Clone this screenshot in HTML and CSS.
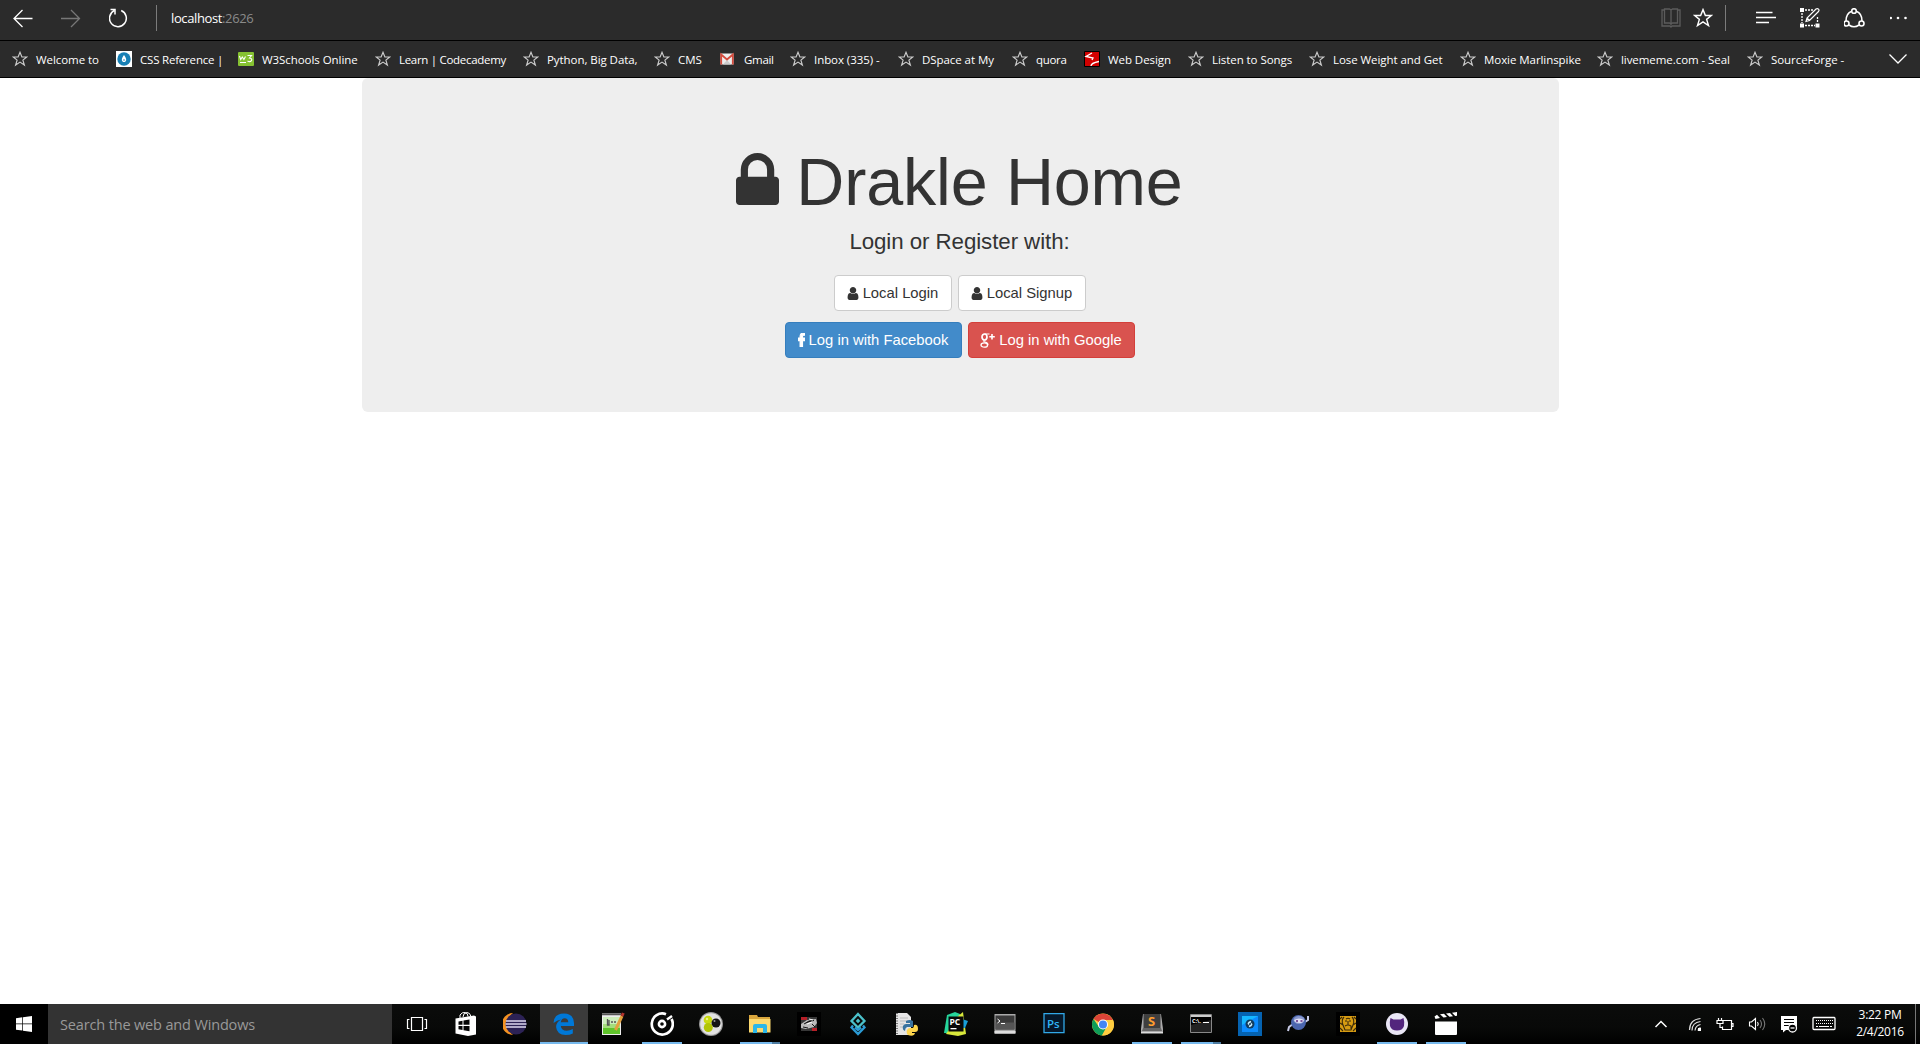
FILE: index.html
```html
<!DOCTYPE html>
<html lang="en">
<head>
<meta charset="utf-8">
<title>Drakle Home</title>
<link rel="stylesheet" href="styles.css">
</head>
<body>
<svg class="defs" width="0" height="0" aria-hidden="true">
  <symbol id="star" viewBox="0 0 16 16"><path d="M8 1.3L9.9 6h4.8l-3.8 3.1 1.5 5L8 11.1l-4.4 3 1.5-5L1.3 6h4.8z" fill="none" stroke="currentColor" stroke-width="1.15"/></symbol>
  <symbol id="user" viewBox="256 128 1280 1536"><path fill="currentColor" d="M1536 1399q0 109-62.5 187t-150.5 78h-854q-88 0-150.5-78t-62.5-187q0-85 8.5-160.5t31.5-152 58.5-131 94-89 134.5-34.5q131 128 313 128t313-128q76 0 134.5 34.5t94 89 58.5 131 31.5 152 8.5 160.5zm-256-887q0 159-112.5 271.5t-271.5 112.5-271.5-112.5-112.5-271.5 112.5-271.5 271.5-112.5 271.5 112.5 112.5 271.5z"/></symbol>
</svg>

<header class="toolbar">
  <div class="nav">
    <svg width="20" height="20" viewBox="0 0 20 20" fill="none" stroke="#fff" stroke-width="1.3"><path d="M19.5 10.500H1M9.500 2L1 10.500l8.500 8.500"/></svg>
    <svg width="20" height="20" viewBox="0 0 20 20" fill="none" stroke="#777" stroke-width="1.3"><path d="M0 10.500H18.500M10 2L18.500 10.500 10 19"/></svg>
    <svg width="20" height="20" viewBox="1 0 20 20" fill="none" stroke="#fff" stroke-width="1.500"><path d="M13.200 2.500a8.400 8.400 0 1 1-7 .200M2.500 1.500h4.500v5"/></svg>
  </div>
  <div class="address"><span class="host">localhost</span><span class="port">:2626</span></div>
  <div class="page-tools">
    <svg width="20" height="20" viewBox="0 0 20 20" fill="none" stroke="#5c5c5c" stroke-width="1.300"><path d="M3 2H1v16h8l1 1 1-1h8V2h-2M3.500 1h5L10 2v14l-1.500-1h-5zM16.500 1h-5L10 2v14l1.500-1h5z"/></svg>
    <svg width="20" height="20" viewBox="0 0 16 16" class="fav"><use href="#star"/></svg>
  </div>
  <div class="hub">
    <svg width="20" height="20" viewBox="0 0 20 20" fill="none" stroke="#fff" stroke-width="1.300"><path d="M0 4.500h16.500M0 9.500h20M0 14.500h13"/></svg>
    <svg width="20" height="20" viewBox="0 0 20 20" fill="none" stroke="#fff"><path stroke-width="1.300" stroke-dasharray="2 1" d="M5 2h8M2 5v10M5 17.500h10M17.500 9v6"/><path fill="#fff" stroke="none" d="M0 0h4v4H0zM0 15.500h4v4H0zM15.500 15.500h4v4h-4z"/><path stroke-width="1.200" d="M6 13.500l1-3.500L16 1q1.500-.8 2.500.2t0 2.300l-9 9zM7 10l2.500 2.500"/></svg>
    <svg width="22" height="20" viewBox="1 0 22 20" fill="none" stroke="#fff" stroke-width="1.600"><circle cx="11" cy="3" r="2.300"/><circle cx="3.500" cy="15.500" r="2.500"/><circle cx="18.500" cy="15.500" r="2.500"/><path d="M8.700 3.300Q3 5.500 3 13M13.300 3.300Q19 5.500 19 13M6 17q5 3.500 10 0"/></svg>
    <svg width="20" height="20" viewBox="2 0 20 20" fill="#fff"><circle cx="2.800" cy="10" r="1.300"/><circle cx="10" cy="10" r="1.300"/><circle cx="17.500" cy="10" r="1.300"/></svg>
  </div>
</header>

<nav class="bookmarks">
  <a><svg class="bi"><use href="#star"/></svg><span>Welcome to</span></a>
  <a><svg class="bi" viewBox="0 0 16 16"><path fill="#fff" d="M0 0h16v16H0z"/><circle cx="8" cy="8" r="6.700" fill="#1780b5"/><path fill="#fff" d="M8 4q3.500 4.500 1.500 6.500-1.500 1-3 0Q4.500 8.500 8 4z"/><circle cx="8" cy="9" r=".8" fill="#1780b5"/></svg><span>CSS Reference |</span></a>
  <a><svg class="bi" viewBox="0 0 16 16"><rect y="1" width="16" height="14" rx="1" fill="#86c232"/><path d="M1.500 5l1.200 3.500 1.600-2.500 1.600 2.500L7.500 5.500M9.500 4.500h4l-2 2.500q3 .5 2 2.700-1.500 1.800-4 .3M2 11.500h6" fill="none" stroke="#fff" stroke-width="1.100"/></svg><span>W3Schools Online</span></a>
  <a><svg class="bi"><use href="#star"/></svg><span>Learn | Codecademy</span></a>
  <a><svg class="bi"><use href="#star"/></svg><span>Python, Big Data,</span></a>
  <a><svg class="bi"><use href="#star"/></svg><span>CMS</span></a>
  <a><svg class="bi" viewBox="0 0 16 16"><path fill="#eee" d="M.5 2.500h13v11H.5z"/><path fill="#ccc" d="M3 13.500l4-4.500 4 4.500z"/><path d="M1.200 13.500V3.500L7 8.500l5.800-5v10" fill="none" stroke="#d54b3d" stroke-width="1.800"/></svg><span>Gmail</span></a>
  <a><svg class="bi"><use href="#star"/></svg><span>Inbox (335) -</span></a>
  <a><svg class="bi"><use href="#star"/></svg><span>DSpace at My</span></a>
  <a><svg class="bi"><use href="#star"/></svg><span>quora</span></a>
  <a><svg class="bi" viewBox="0 0 16 16"><path fill="#d20000" stroke="#000" d="M.5.5h15v15H.5z"/><path d="M8 2L2 5.500l7 1.500-1 2M7 15q0-3 8-4.500" fill="none" stroke="#fff" stroke-width="1.300"/></svg><span>Web Design</span></a>
  <a><svg class="bi"><use href="#star"/></svg><span>Listen to Songs</span></a>
  <a><svg class="bi"><use href="#star"/></svg><span>Lose Weight and Get</span></a>
  <a><svg class="bi"><use href="#star"/></svg><span>Moxie Marlinspike</span></a>
  <a><svg class="bi"><use href="#star"/></svg><span>livememe.com - Seal</span></a>
  <a><svg class="bi"><use href="#star"/></svg><span>SourceForge -</span></a>
  <svg class="more" width="18" height="10" viewBox="0 0 18 10" fill="none" stroke="#fff" stroke-width="1.300"><path d="M.5.5L9 9 17.500.5"/></svg>
</nav>

<main class="page">
  <section class="jumbotron">
    <h1><svg width="43" height="52" viewBox="320 128 1152 1408" preserveAspectRatio="none"><path fill="#333" d="M640 768h512v-192q0-106-75-181t-181-75-181 75-75 181v192zm832 96v576q0 40-28 68t-68 28h-960q-40 0-68-28t-28-68v-576q0-40 28-68t68-28h32v-192q0-184 132-316t316-132 316 132 132 316v192h32q40 0 68 28t28 68z"/></svg><span>Drakle Home</span></h1>
    <p>Login or Register with:</p>
    <div class="row">
      <a class="btn login"><svg width="12" height="13"><use href="#user"/></svg><span>Local Login</span></a>
      <a class="btn signup"><svg width="12" height="13"><use href="#user"/></svg><span>Local Signup</span></a>
    </div>
    <div class="row">
      <a class="btn facebook"><svg width="7" height="14" viewBox="479 0 864 1664" preserveAspectRatio="none"><path fill="#fff" stroke="#fff" stroke-width="130" d="M1343 12v264h-157q-86 0-116 36t-30 108v189h293l-39 296h-254v759h-306v-759h-255v-296h255v-218q0-186 104-288.500t277-102.500q147 0 228 12z"/></svg><span>Log in with Facebook</span></a>
      <a class="btn google"><svg width="15" height="15" viewBox="0 0 15 15" fill="none" stroke="#fff"><ellipse cx="4.500" cy="4" rx="2.500" ry="3" stroke-width="1.700"/><ellipse cx="4.300" cy="12" rx="3.300" ry="2.200" stroke-width="1.300"/><path stroke-width="1.200" d="M4.500 1h5M4.500 7.200q-1.500 1.300.5 1.800 3 .8 3 2.800"/><path stroke-width="1.600" d="M12 1v5.500M9.300 3.700h5.500"/></svg><span>Log in with Google</span></a>
    </div>
  </section>
</main>

<footer class="taskbar">
  <div class="start"><svg width="16" height="16" viewBox="0 0 16 16" fill="#fff"><path d="M0 2.200l6.300-.9v6.300H0zM7 1.200L16 0v7.600H7zM0 8.300h6.300v6.300L0 13.700zM7 8.300h9V16l-9-1.300z"/></svg></div>
  <div class="search">Search the web and Windows</div>
  <div class="apps">
    <div><svg viewBox="0 0 24 24" fill="none" stroke="#fff" stroke-width="1.200"><path d="M6.500 5.500h11v13h-11zM4.500 7.500h-2v9h2M19.500 7.500h2v9h-2"/></svg></div>
    <div><svg viewBox="0 0 24 24"><path fill="#fff" d="M1.500 6.500L20 3.500l2 1v18L14 24 1.500 21.500z"/><path d="M6 6V3q2-3 5-2.500t3 4M9 5q0-4 4-4.500 3 0 4 4" fill="none" stroke="#fff" stroke-width="1"/><path fill="#050505" d="M4.500 9.500l4-.7v4h-4zM9.500 8.600l6-1v5.200h-6zM4.500 14h4v4l-4-.8zM9.500 14h6v5.200l-6-1z"/></svg></div>
    <div><svg viewBox="0 0 24 24"><path fill="#f59322" d="M10 1A11 11 0 0 0 10 23 14 14 0 0 1 10 1z"/><circle cx="13" cy="12" r="10.500" fill="#2c2255"/><path stroke="#ddd8ef" stroke-width="1.700" d="M3 9h20M2.500 12h21M3 15h20"/></svg></div>
    <div class="active"><svg viewBox="0 0 24 24"><path fill="#0078d7" d="M1.500 11Q2 1.500 12 1.500q9.500 0 10 9.500v3H8.800q.5 4.700 6 4.700 3 0 6-1.700v4.500q-3 1.600-7 1.600-9-.2-9.700-8Q4.200 10 9 7.500q-4 .5-7.500 3.500zM8.800 10.300h7.500q-.2-4-3.700-4-3.200 0-3.800 4z"/></svg></div>
    <div><svg viewBox="0 0 24 24"><path fill="#eee" d="M1 1.500h19v21.500H1z"/><path fill="#cdeebb" d="M2 5h17v8H2z"/><path fill="#a4dd7c" d="M2 12h17v4H2z"/><path fill="#5fc52b" d="M2 16h17v6H2z"/><path d="M1 2.500h19M6.500 7v6H8V8M10 10h2M13 10h2" stroke="#555" stroke-width="1.300" fill="none"/><path stroke="#e3a13e" stroke-width="3" d="M14.500 18L21 4"/><path stroke="#b3332d" stroke-width="3" d="M21 4l1.300-3"/></svg></div>
    <div class="open"><svg viewBox="0 0 24 24" fill="none" stroke="#fff"><path stroke-width="2.700" d="M21.500 7A10.500 10.500 0 1 1 16 2.200"/><circle cx="12" cy="12" r="3.100" stroke-width="2.600"/><path stroke-width="2.400" d="M17 7.500l5-3.500"/></svg></div>
    <div><svg viewBox="0 0 24 24"><circle cx="12" cy="12" r="12" fill="#999"/><circle cx="12" cy="12" r="10.800" fill="#e2e2e2"/><circle cx="9" cy="8" r="4.300" fill="#c9da10"/><circle cx="9.300" cy="15.500" r="4.500" fill="#b2c505"/><circle cx="17" cy="11" r="4.500" fill="#151515"/><circle cx="15.500" cy="9" r="1" fill="#999"/><circle cx="8" cy="7" r="1.200" fill="#edf488"/></svg></div>
    <div class="open stacked"><svg viewBox="0 0 24 24"><path fill="#d9a63d" d="M1 3h8l1 2h12v15H1z"/><path fill="#fbd96f" d="M1 7h21.500v13.500H1z"/><path fill="#29b6e8" d="M5 14q0-2 2-2h10q2 0 2 2v7h-4v-5H9v5H5z"/></svg></div>
    <div><svg viewBox="0 0 24 24"><path fill="#000" d="M0 0h24v24H0z"/><path fill="#373737" d="M4 5h16v14H4z"/><path fill="#b62028" d="M4 5h6v3H4zM15 16h5v3h-5z"/><path fill="#bbb" d="M4 12l6-4 9-1 1 4-3 4-8 2-5-1z"/><path stroke="#171717" d="M7 12l5-3 5-.5M6 15l5 1M15 12l3 3"/><path stroke="#fff" d="M10 12l5-2M12 7l4 1"/></svg></div>
    <div><svg viewBox="0 0 24 24" fill="none" stroke-width="2.300"><path stroke="#4bc1ca" d="M12 2l6.500 7-6.500 6.500L5.500 9z"/><path fill="#4bc1ca" d="M12 6.500l2.300 2.500-2.300 2.300L9.700 9z"/><path stroke="#2b9bd5" d="M7 13.500l-1.500 2 6.500 6.500 6.500-6.500-1.500-2M9 15.500l3 2.500 3-2.500"/></svg></div>
    <div><svg viewBox="0 0 24 24"><path fill="#e5e5e5" d="M1 1h11l4 4v18H1z"/><path stroke="#777" stroke-dasharray="1 1.500" stroke-width="2" d="M2 1v22"/><path stroke="#bbb" d="M5 6h8M5 9h8M5 12h4M5 15h3"/><path fill="#39739f" d="M11 9q4-2 7 0v6h-6q-2 1-2 4-3-1-2-5 1-2 3-2h4v-1h-4z"/><path fill="#fdd54d" d="M19 13q4-1 4 4 0 3-3 3h-3v1h3q-1 4-7 2-2-2-1-5 1-2 3-2h3q1-1 1-3z"/></svg></div>
    <div><svg viewBox="0 0 24 24"><path fill="#26d59b" d="M3 3l8-3 5 2v20L0 21z"/><path fill="#d8e83b" d="M13 5l6-5 3 22-8 2-12-2z"/><path fill="#189fd9" d="M18 7l6 2-3 7h-4z"/><path fill="#090909" d="M4.500 4.500h15v15h-15z"/><path fill="#fff" d="M6.500 16h6v1.300h-6z"/><text x="5.500" y="12.500" font-size="8.500" font-weight="700" fill="#fff">PC</text></svg></div>
    <div><svg viewBox="0 0 24 24"><path fill="#aaa" d="M1.500 2h21v20h-21z"/><path fill="#3a3a3a" d="M2.500 3.500h19v14h-19z"/><path fill="#555" d="M2.500 10.500h19v7h-19z"/><path fill="#ddd" d="M1.500 19h21v2h-21z"/><path d="M4.500 7l2.500 2-2.500 2M8 11.500h4" fill="none" stroke="#fff"/></svg></div>
    <div><svg viewBox="0 0 24 24"><path fill="#06182a" stroke="#31a8e8" stroke-width="1.300" d="M2 1.600h20v19H2z"/><text x="5" y="15.500" font-size="11.500" font-weight="600" fill="#31b5f5">Ps</text></svg></div>
    <div><svg viewBox="0 0 24 24"><circle cx="12" cy="12.500" r="11" fill="#ffcd40"/><path fill="#db4437" d="M12 12.500L2.500 7A11 11 0 0 1 21.800 8z"/><path fill="#0f9d58" d="M2.500 7A11 11 0 0 0 11 23.500l4.500-8.500H8z"/><path fill="#ffcd40" d="M12 8h10a11 11 0 0 1-11 15.500l5-8z"/><circle cx="12" cy="12.500" r="5" fill="#fff"/><circle cx="12" cy="12.500" r="4" fill="#4285f4"/></svg></div>
    <div class="open"><svg viewBox="0 0 24 24"><path fill="#aaa" d="M1 17L3 2h18l2 15v4H1z"/><path fill="#3f3f3f" d="M3.500 2h17v15h-17z"/><path fill="#666" d="M3 16h18l1 3H2z"/><path fill="#ddd" d="M1 20h22v1.500H1z"/><text x="8" y="14" font-size="13" font-weight="700" fill="#ff9d2e">S</text></svg></div>
    <div class="open stacked"><svg viewBox="0 0 24 24"><path fill="#000" stroke="#888" d="M1.500 2.500h21v18h-21z"/><path fill="#ccc" d="M2 3h20v2H2z"/><path fill="#222" d="M2 13l20-5v12H2z"/><text x="3" y="11" font-size="5.500" font-weight="700" fill="#fff">C:\.</text><path fill="#fff" d="M14 10h6v1h-6z"/></svg></div>
    <div><svg viewBox="0 0 24 24"><path fill="#0563b1" d="M0 0h24v24H0z"/><path fill="#0c8cff" d="M4 4h16v16H4z"/><path fill="#15b7ff" d="M4 4h16L4 13z"/><circle cx="12" cy="12" r="4.500" fill="#123c5d"/><path d="M13 9.500l-2 1q-1.300 1 0 2M11 14.500l2-1q1.300-1 0-2" fill="none" stroke="#ccefff" stroke-width="1.500"/></svg></div>
    <div><svg viewBox="0 0 24 24"><path d="M18 10l3-2V4M6 12l-4 3-1 4" fill="none" stroke="#c9cce8" stroke-width="2"/><circle cx="11.500" cy="10.500" r="7.500" fill="#4b66ae"/><ellipse cx="12" cy="8" rx="5.500" ry="4" fill="#8998cc"/><path fill="#e0e1f5" d="M7 8q5-3 10 0-1 3-4 3-5 0-6-3z"/><path stroke="#5c2780" stroke-width="1.500" d="M9 9h2M13.500 9h2"/></svg></div>
    <div><svg viewBox="0 0 24 24"><path fill="#000" d="M0 0h24v24H0z"/><path fill="#d79c12" d="M4 4h16v16H4z"/><path fill="none" stroke="#3a2a0b" stroke-width="1.100" d="M8 5q-3 3-1 8l2 5h6l2-5q2-5-1-8M9 9h2M13 9h2M12 9v4M9 14q3-2 6 0v3M10 7q2-1.500 4 0M4 11l3 2M20 11l-3 2M4 7l2-2M20 7l-2-2M4 16l3 3M20 16l-3 3"/></svg></div>
    <div class="open"><svg viewBox="0 0 24 24"><circle cx="12" cy="12" r="11" fill="#e9e6f5"/><path fill="#53257d" d="M5.500 6l3 1.500h7l3-1.500q1 3 .5 8-1.500 4.500-7 4.500T5 14q-.5-5 .5-8z"/></svg></div>
    <div class="open"><svg viewBox="0 0 24 24" fill="#fff"><path d="M1 9.500h22V22q0 1-1 1H2q-1 0-1-1zM.5 4.500L3 2.700l3 3.300-4.500.9zM6 2.300l4-.6 3 3.300-3.500.6zM12 1.500l4-.6 3 3.400-3.500.5zM18 .8l5-.8v3.700l-1.800.3z"/></svg></div>
  </div>
  <div class="tray">
    <svg class="chevron" width="14" height="24" viewBox="0 0 14 24" fill="none" stroke="#fff" stroke-width="1.500"><path d="M1.500 15L7 9.500l5.500 5.500"/></svg>
    <svg width="14" height="24" viewBox="0 0 14 24" fill="none" stroke="#ddd" stroke-width="1.200"><path d="M1.500 18Q1.500 7.500 12.500 6.500M4 18.500q0-8 8.500-9M7 18.500q.5-5 5.500-6M10 18.500q0-2 2.500-3"/><path fill="#fff" stroke="none" d="M10 16h3v3h-3z"/></svg>
    <svg width="18" height="24" viewBox="0 0 18 24" fill="none" stroke="#fff" stroke-width="1.200"><path d="M7 8.500h8.500v9h-9v-3M16 11.500h1v3h-1M1 8.500h6v3H1zM2.500 6v2.500M5.500 6v2.500M4 11.500v4h2.500"/></svg>
    <svg width="18" height="24" viewBox="0 0 18 24" fill="none" stroke="#fff" stroke-width="1.100"><path d="M1.500 10v4h2l4 3.500v-11l-4 3.500zM9.500 10q1.500 2 0 4"/><path stroke="#777" d="M12 8q3 4 0 8M14.500 6q4.500 6 0 12"/></svg>
    <svg width="18" height="24" viewBox="0 0 18 24"><path fill="#fff" d="M1 4h16v11.500q-5-3-8 2.500H6l-3 2.500V18H1z"/><path stroke="#000" d="M4 7.500h10M4 10.500h10M4 13.500h6"/><circle cx="12.500" cy="16" r="4" fill="#000" stroke="#fff" stroke-width="1.300"/><path stroke="#fff" stroke-width="1.300" d="M10.500 16h4"/></svg>
    <svg width="24" height="24" viewBox="0 0 24 24" fill="none" stroke="#fff"><rect x="1" y="5.500" width="22" height="12" rx="1" stroke-width="1.300"/><path stroke-dasharray="1 1" d="M4 8.500h17M4 11.500h17"/><path stroke-dasharray="2 1 10 1 2" d="M4 14.500h16"/></svg>
  </div>
  <div class="clock"><span>3:22 PM</span><span>2/4/2016</span></div>
</footer>
</body>
</html>
```
FILE: styles.css
```css
* { box-sizing: border-box; }
html, body { height: 100%; }
body { margin: 0; display: flex; flex-direction: column; background: #fff; overflow: hidden; font-family: "Open Sans", "Noto Sans", sans-serif; }
svg { display: block; flex: none; }
.defs { position: absolute; }

.toolbar { height: 41px; flex: none; display: flex; align-items: center; background: #2b2b2b; border-bottom: 1px solid #000; padding-bottom: 4px; color: #fff; }
.nav { display: flex; gap: 28px; padding-left: 13px; width: 157px; height: 26px; align-items: center; border-right: 1px solid #7c7c7c; }
.address { flex: 1; padding-left: 14px; font-size: 13px; letter-spacing: -.38px; }
.port { color: #8a8a8a; }
.page-tools { display: flex; gap: 12px; width: 65px; height: 26px; align-items: center; border-right: 1px solid #7c7c7c; }
.fav { color: #fff; }
.hub { display: flex; gap: 24px; width: 194px; padding-left: 30px; }

.bookmarks { height: 37px; flex: none; display: flex; align-items: center; gap: 17px; padding-left: 12px; background: #2b2b2b; border-bottom: 1px solid #000; color: #fff; font-size: 11.5px; letter-spacing: -.06px; white-space: nowrap; }
.bookmarks a { display: flex; align-items: center; gap: 8px; flex: none; width: 87px; }
.bi { width: 16px; height: 16px; color: #ccc; }
.bookmarks a:nth-child(2) { width: 105px; letter-spacing: -.2px; }
.bookmarks a:nth-child(3) { width: 120px; }
.bookmarks a:nth-child(4) { width: 131px; letter-spacing: -.3px; }
.bookmarks a:nth-child(5) { width: 114px; }
.bookmarks a:nth-child(6) { width: 49px; }
.bookmarks a:nth-child(7) { width: 53px; letter-spacing: -.3px; }
.bookmarks a:nth-child(8) { width: 91px; }
.bookmarks a:nth-child(9) { width: 97px; }
.bookmarks a:nth-child(10) { width: 55px; letter-spacing: -.3px; }
.bookmarks a:nth-child(11) { width: 87px; }
.bookmarks a:nth-child(12) { width: 104px; }
.bookmarks a:nth-child(13) { width: 134px; }
.bookmarks a:nth-child(14) { width: 120px; }
.bookmarks a:nth-child(15) { width: 133px; }
.bookmarks a:nth-child(16) { width: 100px; }
.more { margin-left: auto; margin-right: 13px; }

.page { flex: 1; font-family: "Liberation Sans", Arial, sans-serif; color: #333; }
.jumbotron { width: 1197px; height: 334px; margin: 0 auto 0 362px; padding: 66px 2px 0 0; background: #eee; border-radius: 6px; display: flex; flex-direction: column; align-items: center; }
h1 { margin: 0; height: 76px; display: flex; align-items: center; gap: 17px; font-size: 66.5px; font-weight: 400; line-height: 76px; letter-spacing: -.15px; }
h1 svg { margin-top: -6px; }
p { margin: 8px 0 19px; font-size: 22.3px; line-height: 28px; letter-spacing: -.07px; }
.row { display: flex; gap: 6px; margin-bottom: 11px; }
.btn { display: flex; align-items: center; justify-content: center; gap: 4px; height: 36px; border: 1px solid #ccc; border-radius: 4px; background: #fff; font-size: 14.8px; white-space: nowrap; }
.login { width: 118px; }
.signup { width: 128px; }
.facebook { width: 177px; color: #fff; background: #428bca; border-color: #357ebd; }
.google { width: 167px; color: #fff; background: #d9534f; border-color: #d43f3a; }

.taskbar { height: 40px; flex: none; display: flex; background: linear-gradient(#0b0c0b, #080908 60%, #000); color: #fff; }
.start { width: 48px; display: flex; align-items: center; justify-content: center; background: #000; }
.search { width: 344px; padding-left: 12px; background: #333; color: #999; font-size: 14.5px; line-height: 41px; letter-spacing: -.15px; }
.apps { display: grid; grid-template-columns: repeat(22, 49px); }
.apps div { display: flex; align-items: center; justify-content: center; border-bottom: 2px solid transparent; padding-top: 2px; }
.apps .active { background: #3b3b3b; border-color: #76b9ed; margin: 0 0 0 1px; }
.apps svg { width: 24px; height: 24px; }
.apps .open { margin: 0 4px 0 5px; border-color: #76b9ed; }
.apps .stacked { border-image: linear-gradient(90deg, #76b9ed 31px, #4d7ba0 31px) 2; }
.tray { margin-left: auto; display: flex; align-items: center; gap: 14px; height: 40px; }
.chevron { margin-right: 6px; }
.clock { width: 71px; margin-left: 9px; margin-right: 4px; height: 40px; padding-bottom: 3px; border-right: 1px solid #777; display: flex; flex-direction: column; align-items: center; justify-content: center; font-size: 12px; line-height: 17px; letter-spacing: -.3px; }
```
